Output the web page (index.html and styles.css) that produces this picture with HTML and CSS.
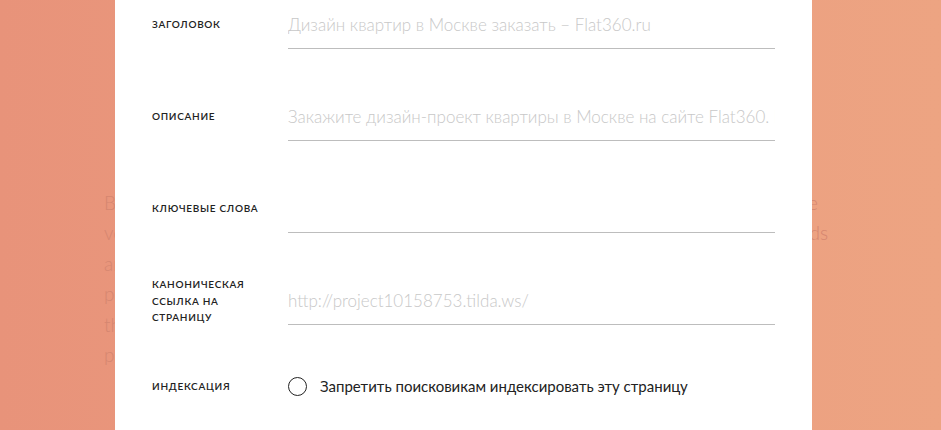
FILE: index.html
```html
<!DOCTYPE html>
<html>
<head>
	<title>Настройки страницы</title>
	<link rel="stylesheet" href="styles.css">
</head>
<body>
	<div class="backdrop">
		<div class="backdrop_text">
			<div class="line line_wide">Before you start editing, think about the page you want to make, the</div>
			<div class="line line_wider">vocabulary and the tone of voice matter and help you pick the words</div>
			<div class="line">and images for the page</div>
			<div class="line">people who will read it</div>
			<div class="line">the message you send</div>
			<div class="line">page</div>
		</div>
	</div>

	<div class="modal">
		<div class="row">
			<div class="label">Заголовок</div>
			<div class="field">
				<input type="text" class="text_input" placeholder="Дизайн квартир в Москве заказать – Flat360.ru">
			</div>
		</div>
		<div class="row">
			<div class="label">Описание</div>
			<div class="field">
				<input type="text" class="text_input" placeholder="Закажите дизайн-проект квартиры в Москве на сайте Flat360. Большой выбор готовых решений">
			</div>
		</div>
		<div class="row">
			<div class="label">Ключевые слова</div>
			<div class="field">
				<input type="text" class="text_input">
			</div>
		</div>
		<div class="row">
			<div class="label">Каноническая<br>ссылка на<br>страницу</div>
			<div class="field">
				<input type="text" class="text_input" placeholder="http://project10158753.tilda.ws/">
			</div>
		</div>
		<div class="row row_check">
			<div class="label">Индексация</div>
			<div class="field">
				<label class="radio_item">
					<span class="radio_circle"></span>
					<span class="radio_text">Запретить поисковикам индексировать эту страницу</span>
				</label>
			</div>
		</div>
	</div>
</body>
</html>
```
FILE: styles.css
```css
*{
	margin: 0px;
	padding: 0px;
	box-sizing: border-box;
}
body
{
	width: 941px;
	height: 430px;
	overflow: hidden;
	font-family: "Lato", "Noto Sans", sans-serif;
}
.backdrop
{
	height: 430px;
	background: linear-gradient(90deg, #e8937a 0%, #eb9c7f 50%, #eda482 100%);
	padding: 188px 0px 0px 104px;
}
.backdrop_text
{
	color: #d58670;
	font-size: 19px;
	font-weight: 300;
	line-height: 30.4px;
}
.line
{
	white-space: nowrap;
}
.line_wide, .line_wider
{
	white-space: normal;
	text-align: justify;
	text-align-last: justify;
	height: 30.4px;
	overflow: hidden;
}
.line_wide
{
	width: 714px;
}
.line_wider
{
	width: 724px;
}
.modal
{
	position: absolute;
	top: 0px;
	left: 115px;
	width: 697px;
	height: 430px;
	background-color: #fff;
	padding: 0px 37px 0px 37px;
}
.row
{
	display: flex;
	align-items: center;
	margin-bottom: 43px;
}
.label
{
	width: 136px;
	flex: none;
	font-size: 10px;
	font-weight: 600;
	letter-spacing: 0.7px;
	text-transform: uppercase;
	line-height: 16.5px;
	color: #222;
}
.field
{
	flex: 1;
}
.text_input
{
	display: block;
	width: 100%;
	height: 49px;
	border: none;
	border-bottom: 1px solid #bdbdbd;
	outline: none;
	background: transparent;
	font-family: "Lato", "Noto Sans", sans-serif;
	font-size: 17px;
	font-weight: 300;
	color: #222;
}
.text_input::placeholder
{
	color: #c8c8c8;
}
.row_check
{
	margin-top: 51px;
}
.radio_item
{
	display: flex;
	align-items: center;
}
.radio_circle
{
	width: 19px;
	height: 19px;
	border: 1.5px solid #222;
	border-radius: 50%;
	margin-right: 13px;
}
.radio_text
{
	font-size: 15px;
	color: #222;
}
```
